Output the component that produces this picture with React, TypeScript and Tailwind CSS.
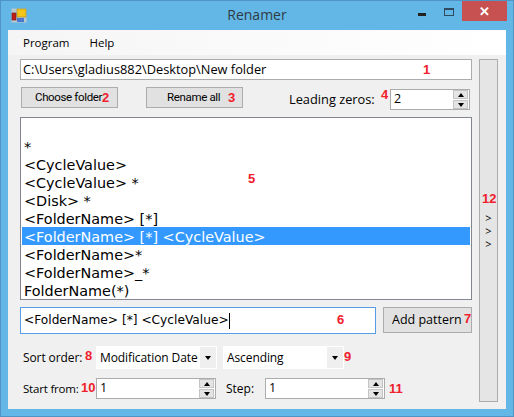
const segoe = { fontFamily: '"Open Sans", "Noto Sans", sans-serif' };

const patterns = [
  '',
  '*',
  '<CycleValue>',
  '<CycleValue> *',
  '<Disk> *',
  '<FolderName> [*]',
  '<FolderName> [*] <CycleValue>',
  '<FolderName>*',
  '<FolderName>_*',
  'FolderName(*)',
];

const Num = ({ n, className }: { n: string; className: string }) => (
  <span className={`absolute font-['Liberation_Sans',sans-serif] text-[13px] leading-[15px] font-bold text-[#f0202c] ${className}`}>{n}</span>
);

const Spinner = () => (
  <div className="flex w-[15px] flex-col gap-px">
    <div className="flex h-[9px] items-center justify-center border border-[#c4c4c4] bg-[#e4e4e4]">
      <div className="h-0 w-0 border-x-[3.5px] border-b-[4px] border-x-transparent border-b-black" />
    </div>
    <div className="flex h-[9px] items-center justify-center border border-[#c4c4c4] bg-[#e4e4e4]">
      <div className="h-0 w-0 border-x-[3.5px] border-t-[4px] border-x-transparent border-t-black" />
    </div>
  </div>
);

const NumberBox = ({ value, className }: { value: string; className: string }) => (
  <div className={`flex items-center justify-between border border-[#acacac] bg-white pl-[3px] pr-px text-[12.5px] text-black ${className}`}>
    <span>{value}</span>
    <Spinner />
  </div>
);

const Combo = ({ value, className }: { value: string; className: string }) => (
  <div className={`flex h-[23px] items-center justify-between border border-white bg-white pl-[3px] text-[12px] tracking-[-0.1px] text-black ${className}`}>
    <span>{value}</span>
    <div className="flex h-[21px] w-[16px] items-center justify-center bg-[#efefef]">
      <div className="h-0 w-0 border-x-[3.5px] border-t-[4px] border-x-transparent border-t-black" />
    </div>
  </div>
);

export default function App() {
  return (
    <div className="flex h-[417px] w-[514px] flex-col overflow-hidden border border-[#4f94c4] bg-[#63b7e7]" style={segoe}>
      {/* title bar */}
      <div className="relative flex h-[29px] shrink-0 items-start pl-[10px] pt-[7px]">
        <svg width="16" height="15" viewBox="0 0 16 15">
          <rect x="0.5" y="0.5" width="15" height="14" fill="#b9c7cf" />
          <rect x="6" y="1" width="9" height="8" fill="#f5c518" stroke="#a58a20" strokeWidth="0.6" />
          <rect x="1" y="5" width="4" height="7" fill="#c0201a" stroke="#701010" strokeWidth="0.6" />
          <rect x="6" y="10" width="7" height="4" fill="#4a78d0" />
        </svg>
        <div className="absolute left-0 right-0 top-[4px] text-center text-[14px] leading-[20px] text-[#2f3b44]">Renamer</div>
        <div className="absolute left-[417px] top-[12px] h-[3px] w-[8px] bg-[#222]" />
        <div className="absolute left-[443px] top-[7px] h-[8px] w-[10px] border border-t-2 border-[#2f4a5e]" />
        <div className="absolute left-[461px] top-0 flex h-[20px] w-[45px] items-center justify-center bg-[#c75050]">
          <span className="text-[13px] font-bold leading-none text-white">✕</span>
        </div>
      </div>

      {/* client area */}
      <div className="mx-[7px] flex min-h-0 flex-1 flex-col bg-[#f0f0f0]">
        <div className="flex h-[25px] shrink-0 items-center gap-[20px] bg-gradient-to-r from-[#f5f5f5] to-white pl-[15px] text-[11.5px] text-black">
          <span>Program</span>
          <span>Help</span>
        </div>

        <div className="flex flex-1 pl-[12px] pt-[4px]">
          <div className="relative w-[452px]">
            <div className="relative flex h-[21px] items-center border border-[#acacac] bg-white pl-[2px] text-[12.8px] text-black">
              C:\Users\gladius882\Desktop\New folder
              <Num n="1" className="left-[402px] top-[2px]" />
            </div>

            <div className="relative mt-[7px] flex h-[23px] items-start">
              <div className="relative ml-[1px] flex h-[21px] w-[97px] items-center border border-[#acacac] bg-[#e1e1e1] pl-[13px] font-['Roboto',sans-serif] text-[11.5px] tracking-[-0.35px] text-black">
                Choose folder
                <Num n="2" className="left-[80px] top-[2px]" />
              </div>
              <div className="relative ml-[28px] flex h-[21px] w-[97px] items-center border border-[#acacac] bg-[#e1e1e1] pl-[20px] font-['Roboto',sans-serif] text-[11.5px] tracking-[-0.35px] text-black">
                Rename all
                <Num n="3" className="left-[81px] top-[2px]" />
              </div>
              <span className="ml-[46px] mt-[2px] text-[12.8px] leading-[20px] text-black">Leading zeros:</span>
              <Num n="4" className="left-[361px] top-[0px]" />
              <NumberBox value="2" className="absolute left-[370px] top-[2px] h-[21px] w-[80px]" />
            </div>

            <div className="relative mt-[7px] h-[183px] border border-[#82878f] bg-white px-[1px] pt-[1px] font-['DejaVu_Sans',sans-serif] text-[14.4px] leading-[20px] text-black">
              {patterns.map((p, i) => (
                <div key={i} className={`h-[18px] whitespace-pre pl-[2px] ${i === 6 ? 'bg-[#3399ff] text-white' : ''}`}>{p}</div>
              ))}
              <Num n="5" className="left-[227px] top-[53px]" />
            </div>

            <div className="mt-[7px] flex items-start justify-between">
              <div className="relative flex h-[27px] w-[356px] items-center border border-[#569de5] bg-white pl-[3px] font-['DejaVu_Sans',sans-serif] text-[12.2px] text-black">
                <span className="whitespace-pre">{'<FolderName> [*] <CycleValue>'}</span>
                <div className="h-[16px] w-px bg-black" />
                <Num n="6" className="left-[316px] top-[4px]" />
              </div>
              <div className="relative flex h-[26px] w-[89px] items-center border border-[#acacac] bg-[#e1e1e1] pl-[8px] text-[12.5px] text-black">
                Add pattern
                <Num n="7" className="left-[80px] top-[3px]" />
              </div>
            </div>

            <div className="relative mt-[12px] flex items-center text-[12px] text-black">
              <span className="ml-[3px] w-[73px] tracking-[-0.1px]">Sort order:</span>
              <Combo value="Modification Date" className="w-[121px]" />
              <Combo value="Ascending" className="ml-[6px] w-[121px]" />
              <Num n="8" className="left-[65px] top-[2px]" />
              <Num n="9" className="left-[324px] top-[3px]" />
            </div>

            <div className="relative mt-[9px] flex items-center text-[12px] text-black">
              <span className="ml-[3px] w-[73px] whitespace-nowrap text-[11.5px] tracking-[-0.2px]">Start from:</span>
              <NumberBox value="1" className="h-[21px] w-[120px]" />
              <span className="ml-[10px] w-[39px]">Step:</span>
              <NumberBox value="1" className="h-[21px] w-[120px]" />
              <Num n="10" className="left-[61px] top-[2px]" />
              <Num n="11" className="left-[369px] top-[3px]" />
            </div>
          </div>

          {/* side button */}
          <div className="relative ml-[7px] flex h-[343px] w-[19px] flex-col items-center justify-center border border-[#acacac] bg-[#e5e5e5] text-[11px] leading-[13px] text-black">
            <span>&gt;</span>
            <span>&gt;</span>
            <span>&gt;</span>
            <Num n="12" className="left-[2px] top-[131px]" />
          </div>
        </div>
      </div>
      <div className="h-[7px] shrink-0" />
    </div>
  );
}
